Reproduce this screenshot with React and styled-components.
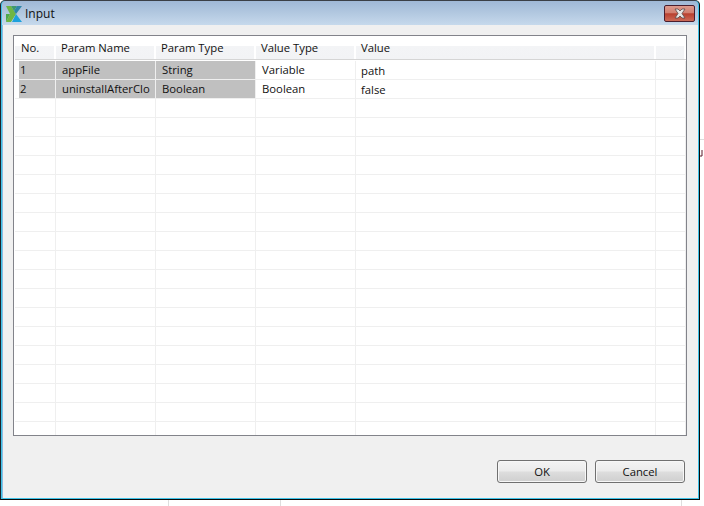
import React from "react";
import styled, { createGlobalStyle } from "styled-components";

const GlobalStyle = createGlobalStyle`
  html, body {
    margin: 0;
    padding: 0;
    background: #ffffff;
    overflow: hidden;
  }
`;

const Page = styled.div`
  position: relative;
  width: 704px;
  height: 506px;
  overflow: hidden;
  background: #ffffff;
  font-family: "Open Sans", "Noto Sans", sans-serif;
`;

const BackLineH = styled.div`
  position: absolute;
  left: 700px;
  right: 0;
  top: ${(props) => props.top}px;
  height: 1px;
  background: #dcdcdc;
`;

const BackLineV = styled.div`
  position: absolute;
  top: 500px;
  bottom: 0;
  left: ${(props) => props.left}px;
  width: 1px;
  background: #dedede;
`;

const BackGlyph = styled.svg`
  position: absolute;
  left: 700px;
  top: 150px;
`;

const Window = styled.div`
  box-sizing: border-box;
  width: 700px;
  height: 500px;
  display: flex;
  flex-direction: column;
  background: #3fc3e8;
  border: 1px solid #0a0a0a;
  border-left-color: #20242a;
  border-top-color: #3a3f46;
  border-radius: 5px 5px 0 0;
  padding: 0 1px 1px 1px;
`;

const TitleBar = styled.div`
  height: 24px;
  flex: none;
  display: flex;
  align-items: flex-start;
  padding-left: 4px;
  background: linear-gradient(#9fb8d6 0%, #b2c8e0 50%, #c6d9ec 100%);
  border-radius: 4px 4px 0 0;
`;

const IconBox = styled.div`
  width: 16px;
  height: 16px;
  margin-top: 4px;
  flex: none;
`;

const TitleText = styled.span`
  font-size: 12px;
  line-height: 16px;
  margin: 5px 0 0 3px;
  color: #111111;
  flex: 1;
`;

const CloseButton = styled.div`
  box-sizing: border-box;
  width: 31px;
  height: 17px;
  margin: 4px 3px 0 0;
  border: 1px solid #4a1e2e;
  border-radius: 2px;
  display: flex;
  align-items: center;
  justify-content: center;
  background: linear-gradient(#dd9a8d 0%, #d27f70 45%, #b9402f 52%, #cc6a58 100%);
`;

const Body = styled.div`
  flex: 1;
  display: flex;
  flex-direction: column;
  padding: 10px 11px 0 10px;
  background: #f0f0f0;
  border-left: 1px solid #8fbce0;
`;

const TableFrame = styled.div`
  box-sizing: border-box;
  height: 401px;
  flex: none;
  border: 1px solid #82838a;
  background: #ffffff;
  padding: 0 0 2px 1px;
  overflow: hidden;
`;

const HeaderRow = styled.div`
  display: grid;
  grid-template-columns: 41px 100px 100px 100px 300px 1fr;
  height: 24px;
  box-sizing: border-box;
  border-bottom: 1px solid #d5d5d5;
  margin-bottom: 1px;
  background: linear-gradient(#ffffff 0%, #ffffff 42%, #f3f4f6 43%, #f2f3f5 100%);
`;

const HeaderCell = styled.div`
  box-sizing: border-box;
  padding-left: ${(props) => (props.first ? 6 : 5)}px;
  font-size: 11.3px;
  line-height: 23px;
  color: #111111;
  border-right: 2px solid #ffffff;
`;

const Row = styled.div`
  display: grid;
  grid-template-columns: 41px 100px 100px 100px 300px 1fr;
  height: 19px;
  box-sizing: border-box;
  border-bottom: 1px solid #efefef;
`;

const Cell = styled.div`
  box-sizing: border-box;
  padding-left: ${(props) => (props.first ? 1 : props.low ? 5 : 6)}px;
  margin-left: ${(props) => (props.first ? 4 : 0)}px;
  font-size: 11.3px;
  line-height: ${(props) => (props.low ? 20 : 17)}px;
  color: #111111;
  white-space: nowrap;
  overflow: hidden;
  border-right: 1px solid #efefef;
  background: ${(props) => (props.shaded ? "#c0c0c0" : "transparent")};
`;

const DialogFooter = styled.div`
  display: flex;
  justify-content: flex-end;
  gap: 8px;
  padding: 24px 2px 0 0;
`;

const FooterButton = styled.button`
  box-sizing: border-box;
  width: 90px;
  height: 23px;
  padding: 0;
  border: 1px solid #707070;
  border-radius: 3px;
  font-family: inherit;
  font-size: 11.3px;
  color: #111111;
  background: linear-gradient(#f3f3f3 0%, #ebebeb 48%, #dddddd 52%, #cfcfcf 100%);
  box-shadow: inset 0 0 0 1px #f7f7f7;
`;

const columns = ["No.", "Param Name", "Param Type", "Value Type", "Value", ""];

const rows = [
  ["1", "appFile", "String", "Variable", "path"],
  ["2", "uninstallAfterClo", "Boolean", "Boolean", "false"],
  ...Array.from({ length: 18 }, () => ["", "", "", "", ""]),
];

const AppIcon = () => (
  <svg width="16" height="16" viewBox="0 0 16 16">
    <polygon points="0,0 5,0 10,8 5,16 0,16 4,8" fill="#6fb644" />
    <polygon points="0,8 4,8 0,16" fill="#4fa84a" />
    <polygon points="5,0 11,0 8,5" fill="#3f9a6c" />
    <polygon points="11,0 16,0 10,8 8,5" fill="#2f86a8" />
    <polygon points="10,8 16,16 6,16" fill="#1da1dc" />
  </svg>
);

const CloseIcon = () => (
  <svg width="14" height="11" viewBox="0 0 14 11">
    <path
      d="M2 1 H5 L7 3 L9 1 H12 L9 5.5 L12 10 H9 L7 8 L5 10 H2 L5 5.5 Z"
      fill="#e6e6e6"
      stroke="#5c4a4a"
      strokeWidth="0.8"
    />
  </svg>
);

export default function App() {
  return (
    <Page>
      <GlobalStyle />
      <BackLineH top={139} />
      <BackGlyph width="4" height="8" viewBox="0 0 4 8">
        <path d="M2 0 V6 H0" fill="none" stroke="#5a1a2a" strokeWidth="1" />
      </BackGlyph>
      <BackLineV left={168} />
      <BackLineV left={280} />
      <BackLineV left={681} />
      <Window>
        <TitleBar>
          <IconBox>
            <AppIcon />
          </IconBox>
          <TitleText>Input</TitleText>
          <CloseButton>
            <CloseIcon />
          </CloseButton>
        </TitleBar>
        <Body>
          <TableFrame>
            <HeaderRow>
              {columns.map((name, i) => (
                <HeaderCell key={i} first={i === 0}>
                  {name}
                </HeaderCell>
              ))}
            </HeaderRow>
            {rows.map((row, r) => (
              <Row key={r}>
                {row.map((value, c) => (
                  <Cell
                    key={c}
                    first={c === 0}
                    shaded={value && c < 3}
                    low={c === 4}
                  >
                    {value}
                  </Cell>
                ))}
                <Cell />
              </Row>
            ))}
          </TableFrame>
          <DialogFooter>
            <FooterButton>OK</FooterButton>
            <FooterButton>Cancel</FooterButton>
          </DialogFooter>
        </Body>
      </Window>
    </Page>
  );
}
